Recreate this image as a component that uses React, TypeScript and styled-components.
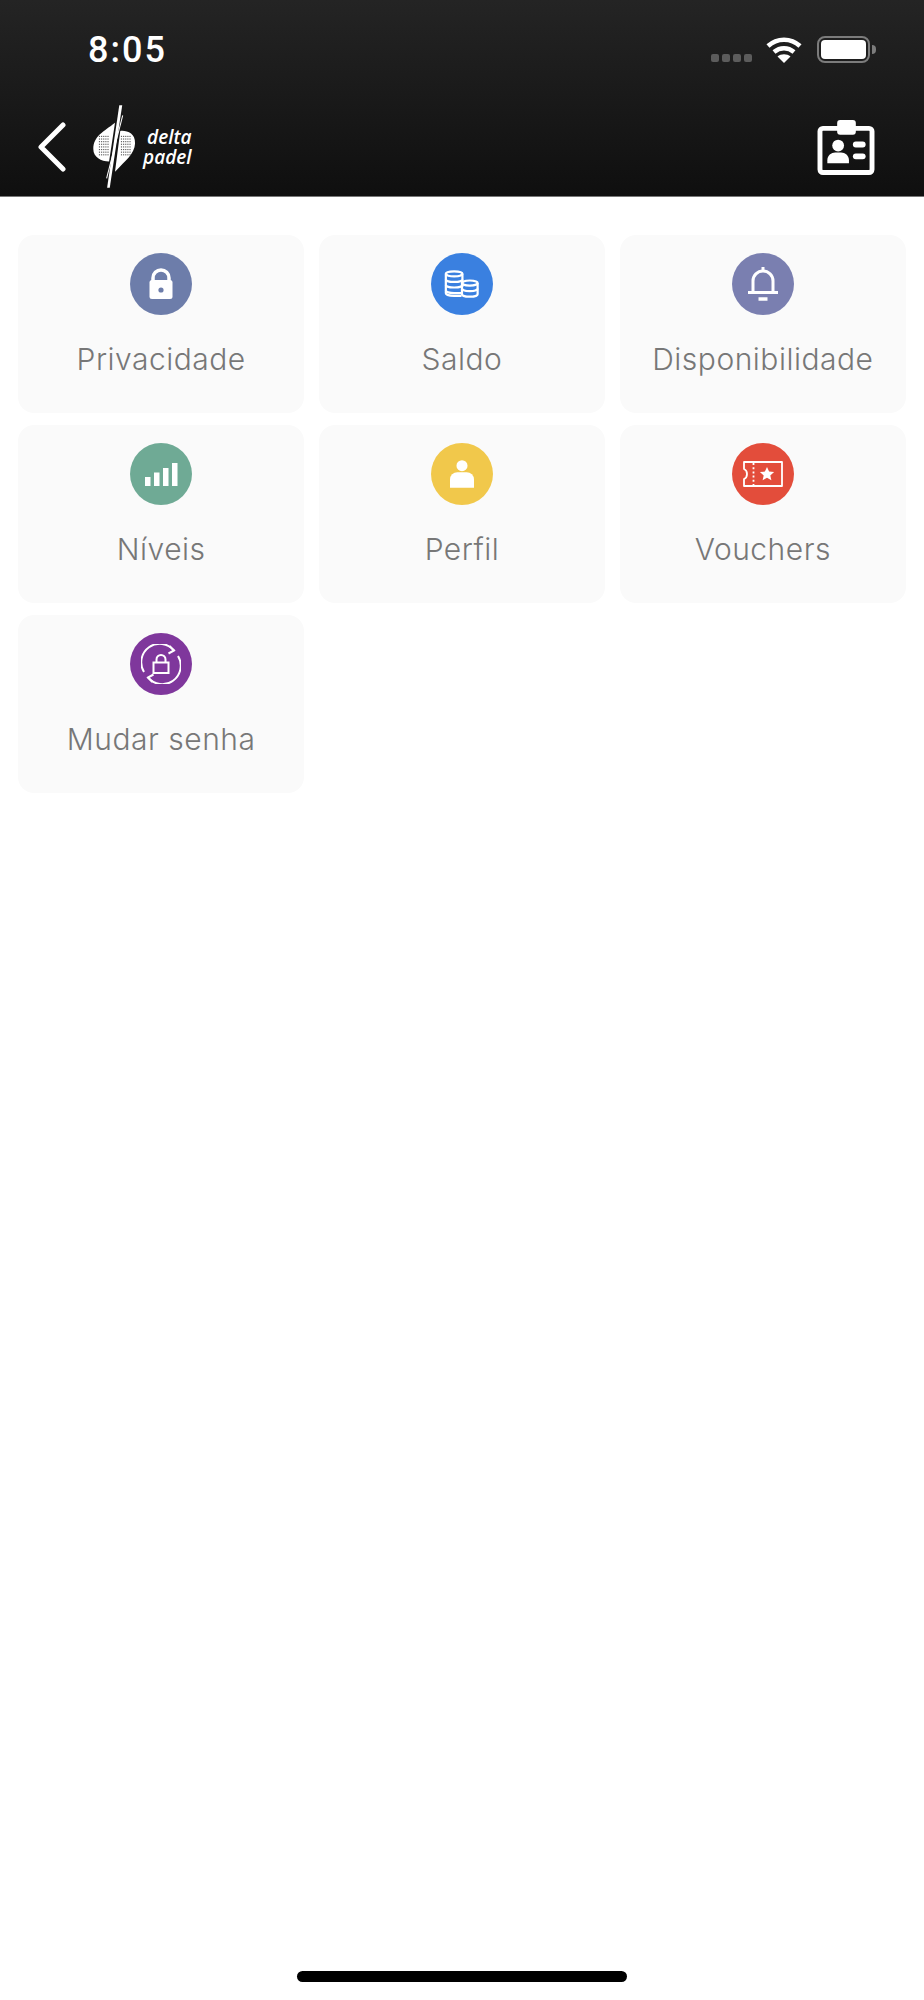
import * as React from 'react'
import styled, { createGlobalStyle } from 'styled-components'

const GlobalStyle = createGlobalStyle`
  html, body {
    margin: 0;
    padding: 0;
    background: #ffffff;
  }
`

const Page = styled.div`
  width: 924px;
  height: 2000px;
  display: flex;
  flex-direction: column;
  background: #ffffff;
  font-family: Inter, "Liberation Sans", sans-serif;
  overflow: hidden;
`
const Header = styled.header`
  height: 197px;
  box-sizing: border-box;
  background: linear-gradient(180deg, #242424 0%, #0f0f0f 100%);
  border-bottom: 1px solid #777777;
  flex-shrink: 0;
`
const StatusBar = styled.div`
  height: 100px;
  box-sizing: border-box;
  padding: 31px 48px 0 88px;
  display: flex;
  justify-content: space-between;
  align-items: flex-start;
`
const Time = styled.div`
  color: #ffffff;
  font-family: Roboto, sans-serif;
  font-size: 36px;
  font-weight: 500;
  line-height: 38px;
  letter-spacing: 2px;
`
const StatusIcons = styled.div`
  display: flex;
  align-items: flex-start;
  padding-top: 5px;
`
const SignalDots = styled.div`
  display: flex;
  gap: 3px;
  margin-top: 18px;
  margin-right: 14px;
`
const SignalDot = styled.span`
  width: 8px;
  height: 8px;
  border-radius: 2px;
  background: #5c5c5c;
`
const Battery = styled.div`
  margin-left: 15px;
  display: flex;
  align-items: center;
`
const BatteryBody = styled.div`
  width: 53px;
  height: 27px;
  box-sizing: border-box;
  border: 2px solid #7c7c7c;
  border-radius: 8px;
  padding: 2px;
`
const BatteryFill = styled.div`
  height: 100%;
  border-radius: 4px;
  background: #ffffff;
`
const BatteryCap = styled.div`
  width: 4px;
  height: 9px;
  margin-left: 2px;
  border-radius: 0 4px 4px 0;
  background: #7c7c7c;
`
const NavBar = styled.nav`
  height: 96px;
  box-sizing: border-box;
  padding: 0 49px 2px 38px;
  display: flex;
  align-items: center;
  justify-content: space-between;
`
const NavLeft = styled.div`
  display: flex;
  align-items: center;
`
const Logo = styled.div`
  display: flex;
  align-items: center;
  margin-left: 26px;
`
const LogoText = styled.div`
  margin-left: 5px;
  color: #ffffff;
  font-family: "Open Sans", sans-serif;
  font-size: 19px;
  font-style: italic;
  font-weight: 600;
  line-height: 20px;
  text-align: right;
`
const Grid = styled.main`
  margin-top: 38px;
  padding: 0 18px;
  display: grid;
  grid-template-columns: repeat(3, 1fr);
  column-gap: 14.5px;
  row-gap: 12px;
`
const Card = styled.div`
  height: 178px;
  box-sizing: border-box;
  padding-top: 18px;
  display: flex;
  flex-direction: column;
  align-items: center;
  background: #fafafa;
  border-radius: 16px;
`
const Badge = styled.div<{ $color: string }>`
  width: 62px;
  height: 62px;
  border-radius: 50%;
  display: flex;
  align-items: center;
  justify-content: center;
  background: ${(p) => p.$color};
`
const Label = styled.div`
  margin-top: 26px;
  color: #777777;
  font-size: 30px;
  font-weight: 300;
  line-height: 36px;
  letter-spacing: 0.5px;
`
const HomeBar = styled.div`
  margin: auto auto 18px;
  width: 330px;
  height: 11px;
  border-radius: 6px;
  background: #000000;
`

const LockIcon = () => (
  <svg width="30" height="34" viewBox="0 0 30 34">
    <path d="M7 15V11a8 8 0 0 1 16 0v4" fill="none" stroke="#fff" strokeWidth="3.5" />
    <rect x="3.500" y="13" width="23" height="19" rx="2.500" fill="#fff" />
    <circle cx="15" cy="23" r="2.600" fill="#6d7daa" />
  </svg>
)

const CoinsIcon = () => (
  <svg width="35" height="28" viewBox="0 0 38 30" fill="none" stroke="#fff" strokeWidth="2.400">
    <ellipse cx="11" cy="4" rx="9" ry="2.800" />
    <path d="M2 4v21c0 1.600 4 2.800 9 2.800h8" />
    <path d="M20 4v14" />
    <path d="M2 10c0 1.600 4 2.800 9 2.800s9-1.200 9-2.800" />
    <path d="M2 16c0 1.600 4 2.800 9 2.800s9-1.200 9-2.800" />
    <path d="M2 22c0 1.600 4 2.800 9 2.800h8" />
    <ellipse cx="28" cy="14" rx="8.500" ry="2.800" />
    <path d="M19.500 14v12c0 1.600 4 2.800 8.500 2.800s8.500-1.200 8.500-2.800V14" />
    <path d="M19.500 20c0 1.600 4 2.800 8.500 2.800s8.500-1.200 8.500-2.800" />
  </svg>
)

const BellIcon = () => (
  <svg width="30" height="34" viewBox="0 0 30 34" fill="none" stroke="#fff" strokeWidth="3">
    <path d="M15 0v5" />
    <path d="M5 25V14a10 10 0 0 1 20 0v11" />
    <path d="M0 25.500h30" />
    <path d="M10.500 32h9" strokeWidth="3.500" />
  </svg>
)

const BarsIcon = () => (
  <svg width="33" height="23" viewBox="0 0 33 23" fill="#fff">
    <rect x="0" y="14" width="5.500" height="9" />
    <rect x="9" y="9.500" width="5.500" height="13.500" />
    <rect x="18" y="5" width="5.500" height="18" />
    <rect x="27" y="0" width="5.500" height="23" />
  </svg>
)

const PersonIcon = () => (
  <svg width="24" height="28" viewBox="0 0 26 30" fill="#fff">
    <circle cx="13" cy="6" r="6" />
    <path d="M0 30V21a8 8 0 0 1 8-8h10a8 8 0 0 1 8 8v9z" />
  </svg>
)

const TicketIcon = () => (
  <svg width="40" height="26" viewBox="0 0 40 26" fill="none" stroke="#fff" strokeWidth="1.800">
    <path d="M1 1h38v24H1v-7c2.500-1 3-3 3-5s-.5-4-3-5z" strokeLinejoin="round" />
    <path d="M10.500 2v22" strokeDasharray="2 2.200" />
    <path
      d="M24 6l2.100 4.600 5 .5-3.800 3.300 1.100 4.900-4.400-2.600-4.400 2.600 1.100-4.900-3.800-3.300 5-.5z"
      fill="#fff"
      stroke="none"
    />
  </svg>
)

const ResetLockIcon = () => (
  <svg width="40" height="40" viewBox="0 0 40 40" fill="none" stroke="#fff" strokeWidth="2">
    <path d="M3 28A18.500 18.500 0 0 1 33 6.500" />
    <path d="M28.500 2l4.500 4.500-5.500 3" />
    <path d="M37 12A18.500 18.500 0 0 1 7 33.500" />
    <path d="M11.500 38L7 33.500l5.500-3" />
    <rect x="12.500" y="18.500" width="15" height="10.500" />
    <path d="M15.500 18.500v-3a4.500 4.500 0 0 1 9 0v3" />
  </svg>
)

const RacketLogo = () => (
  <svg width="46" height="86" viewBox="64 30 140 258">
    <path d="M134 85C100 112 68 125 68 165c0 25 24 38 48 38z" fill="#fff" />
    <path d="M150 110c20-2 46 6 45 38-1 32-32 54-55 80l-6 6z" fill="#fff" />
    <g fill="#5a5a5a">
      {[0, 1, 2, 3, 4, 5, 6, 7].map((r) =>
        [0, 1, 2, 3, 4].map((c) => (
          <React.Fragment key={`${r}-${c}`}>
            <rect x={85 + c * 6.5} y={125 + r * 8} width="3.500" height="3.500" />
            <rect x={152 + c * 6.5} y={125 + r * 8} width="3.500" height="3.500" />
          </React.Fragment>
        )),
      )}
    </g>
    <path d="M147 32h9l-38 251h-8z" fill="#fff" stroke="#161616" strokeWidth="5" paintOrder="stroke" />
    <path d="M156 62l3 1-49 192-3-1z" fill="#fff" />
  </svg>
)

const items = [
  { label: 'Privacidade', color: '#6d7daa', icon: <LockIcon /> },
  { label: 'Saldo', color: '#3a80e0', icon: <CoinsIcon /> },
  { label: 'Disponibilidade', color: '#7a7fb0', icon: <BellIcon /> },
  { label: 'Níveis', color: '#6faa95', icon: <BarsIcon /> },
  { label: 'Perfil', color: '#f1c84b', icon: <PersonIcon /> },
  { label: 'Vouchers', color: '#e34d3b', icon: <TicketIcon /> },
  { label: 'Mudar senha', color: '#7f379c', icon: <ResetLockIcon /> },
]

const App = () => {
  return (
    <Page>
      <GlobalStyle />
      <Header>
        <StatusBar>
          <Time>8:05</Time>
          <StatusIcons>
            <SignalDots>
              <SignalDot />
              <SignalDot />
              <SignalDot />
              <SignalDot />
            </SignalDots>
            <svg width="36" height="27" viewBox="0 0 36 27" fill="none" stroke="#fff" strokeWidth="4.500">
              <path d="M2 10c9-8.500 23-8.500 32 0" />
              <path d="M8 16c6-5 14-5 20 0" />
              <path d="M18 27l-6.500-6.500c3.500-3 9.500-3 13 0z" fill="#fff" stroke="none" />
            </svg>
            <Battery>
              <BatteryBody>
                <BatteryFill />
              </BatteryBody>
              <BatteryCap />
            </Battery>
          </StatusIcons>
        </StatusBar>
        <NavBar>
          <NavLeft>
            <svg width="28" height="50" viewBox="0 0 28 50" fill="none" stroke="#fff" strokeWidth="5" strokeLinecap="round" strokeLinejoin="round">
              <path d="M25 3L3 25l22 22" />
            </svg>
            <Logo>
              <RacketLogo />
              <LogoText>
                delta
                <br />
                padel
              </LogoText>
            </Logo>
          </NavLeft>
          <svg width="58" height="55" viewBox="0 0 58 56">
            <rect x="2.500" y="8.500" width="53" height="45" rx="3" fill="none" stroke="#fff" strokeWidth="5" />
            <rect x="20" y="0" width="19" height="15" rx="3" fill="#fff" />
            <circle cx="21" cy="26" r="6" fill="#fff" />
            <path d="M10 44v-3c0-5 4-8 8-8h6c4 0 8 3 8 8v3z" fill="#fff" />
            <rect x="36" y="22" width="13" height="6" rx="3" fill="#fff" />
            <rect x="36" y="34" width="13" height="6" rx="3" fill="#fff" />
          </svg>
        </NavBar>
      </Header>
      <Grid>
        {items.map((item) => (
          <Card key={item.label}>
            <Badge $color={item.color}>{item.icon}</Badge>
            <Label>{item.label}</Label>
          </Card>
        ))}
      </Grid>
      <HomeBar />
    </Page>
  )
}

export default App
